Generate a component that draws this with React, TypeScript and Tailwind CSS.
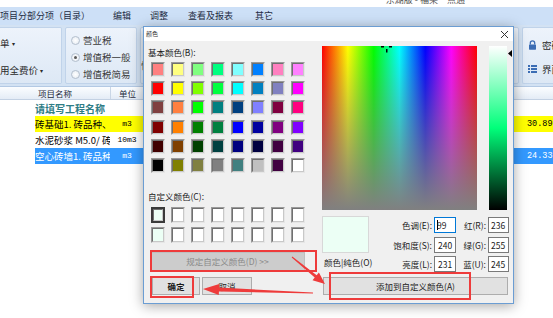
import React from "react";

const BASIC: string[][] = [
  ["#FF8080", "#FFFF80", "#80FF80", "#00FF80", "#80FFFF", "#0080FF", "#FF80C0", "#FF80FF"],
  ["#FF0000", "#FFFF00", "#80FF00", "#00FF40", "#00FFFF", "#0080C0", "#8080C0", "#FF00FF"],
  ["#804040", "#FF8040", "#00FF00", "#008080", "#004080", "#8080FF", "#800040", "#FF0080"],
  ["#800000", "#FF8000", "#008000", "#008040", "#0000FF", "#0000A0", "#800080", "#8000FF"],
  ["#400000", "#804000", "#004000", "#004040", "#000080", "#000040", "#400040", "#400080"],
  ["#000000", "#808000", "#808040", "#808080", "#408080", "#C0C0C0", "#400040", "#FFFFFF"],
];

const CUSTOM: string[] = [
  "#ECFFF5", "#FFFFFF", "#FFFFFF", "#FFFFFF", "#FFFFFF", "#FFFFFF", "#FFFFFF", "#FFFFFF",
  "#ECFFF5", "#FFFFFF", "#FFFFFF", "#FFFFFF", "#FFFFFF", "#FFFFFF", "#FFFFFF", "#FFFFFF",
];

const FIELDS: [string, string, string, string][] = [
  ["色调(E):", "99", "红(R):", "236"],
  ["饱和度(S):", "240", "绿(G):", "255"],
  ["亮度(L):", "231", "蓝(U):", "245"],
];

function Swatch({ color, tall, focus }: { color: string; tall?: boolean; focus?: boolean }) {
  return (
    <div
      className={
        focus
          ? "w-[14px] h-[16px] border-2 border-[#3a3a3a]"
          : tall
          ? "w-[14px] h-[16px] border border-t-[#9a9a9a] border-l-[#9a9a9a] border-b-[#e6e6e6] border-r-[#e6e6e6]"
          : "w-[14px] h-[15px] border border-t-[#9a9a9a] border-l-[#9a9a9a] border-b-[#e6e6e6] border-r-[#e6e6e6]"
      }
    >
      <div
        className="w-full h-full border border-t-[#707070] border-l-[#707070] border-b-[#c8c8c8] border-r-[#c8c8c8]"
        style={{ backgroundColor: color }}
      />
    </div>
  );
}

function Radio({ checked, label }: { checked?: boolean; label: string }) {
  return (
    <div className="h-[17px] flex items-center">
      <div className="w-[9px] h-[9px] rounded-full border border-[#b3bfcd] bg-[radial-gradient(circle,#ffffff,#e3e9f1)] flex items-center justify-center">
        {checked ? <div className="w-[3px] h-[3px] rounded-full bg-[#5a5a5a]" /> : null}
      </div>
      <span className="ml-[3px]">{label}</span>
    </div>
  );
}

export default function App() {
  return (
    <div className="relative w-[553px] h-[318px] overflow-hidden bg-white font-['Noto_Sans_CJK_SC','Noto_Sans',sans-serif] text-[#1a1a1a]">
      {/* window title strip */}
      <div className="h-[7px] overflow-hidden flex justify-end pr-[88px] bg-white">
        <span className="-mt-[6px] text-[9px] leading-[12px] text-[#555] whitespace-nowrap">东湖版 - 福莱一点通</span>
      </div>

      {/* menu bar */}
      <div className="h-[18px] bg-[#cde0f7] flex items-center text-[9px] leading-[12px] text-[#1e2d44] whitespace-nowrap">
        <span>项目分部分项（目录）</span>
        <span className="ml-[23px]">编辑</span>
        <span className="ml-[19px]">调整</span>
        <span className="ml-[20px]">查看及报表</span>
        <span className="ml-[22px]">其它</span>
      </div>

      {/* ribbon */}
      <div className="h-[62px] bg-[#d3e2f3] flex items-stretch py-[2px] border-b border-[#b3c9e4] text-[9.5px] leading-[12px] text-[#2a2a2a] whitespace-nowrap">
        <div className="w-[62px] shrink-0 rounded-r-[2px] border border-l-0 border-[#c0d3ea] bg-[linear-gradient(to_bottom,#edf3fb,#dde8f5)] flex flex-col">
          <span className="mt-[9px]">
            单 <span className="text-[6px] align-middle">▾</span>
          </span>
          <span className="mt-[14px]">
            用全费价 <span className="text-[6px] align-middle">▾</span>
          </span>
        </div>
        <div className="ml-[3px] w-[72px] shrink-0 rounded-[2px] border border-[#c0d3ea] bg-[linear-gradient(to_bottom,#edf3fb,#dde8f5)] flex flex-col pt-[3.5px] pl-[5px] text-[#3a3a3a]">
          <Radio label="营业税" />
          <Radio checked label="增值税一般" />
          <Radio label="增值税简易" />
        </div>
        <div className="ml-[3px] flex-1 min-w-0 rounded-[2px] border border-[#c0d3ea] bg-[linear-gradient(to_bottom,#edf3fb,#dde8f5)] flex flex-col">
          <span className="mt-[31px] text-[#3a3a3a]">恒</span>
        </div>
        <div className="ml-[3px] w-[31px] shrink-0 overflow-hidden rounded-l-[2px] border border-r-0 border-[#c0d3ea] bg-[linear-gradient(to_bottom,#edf3fb,#dde8f5)] flex flex-col pl-[5px]">
          <div className="mt-[11px] flex items-center">
            <svg className="shrink-0" width="9" height="10" viewBox="0 0 9 10">
              <path d="M2.3 4.6V3.1a2.2 2.2 0 0 1 4.4 0v1.5" fill="none" stroke="#3c6db4" strokeWidth="1.3" />
              <rect x="1" y="4.5" width="7" height="5.2" rx="0.6" fill="#3c6db4" />
            </svg>
            <span className="ml-[5px]">密码</span>
          </div>
          <div className="mt-[12px] flex items-center">
            <svg className="shrink-0" width="9" height="8" viewBox="0 0 9 8">
              <rect x="0" y="0" width="2" height="2" fill="#3c6db4" />
              <rect x="3" y="0" width="6" height="2" fill="#3c6db4" />
              <rect x="0" y="3" width="2" height="2" fill="#3c6db4" />
              <rect x="3" y="3" width="6" height="2" fill="#3c6db4" />
              <rect x="0" y="6" width="2" height="2" fill="#3c6db4" />
              <rect x="3" y="6" width="6" height="2" fill="#3c6db4" />
            </svg>
            <span className="ml-[5px]">界面</span>
          </div>
        </div>
      </div>

      {/* table header */}
      <div className="h-[13px] flex bg-[linear-gradient(to_bottom,#fbfdff,#e4ecf6)] border-b border-[#c3d1e3] text-[8.5px] leading-[12px] text-[#1e2b3c]">
        <div className="w-[110px] flex items-center justify-center">项目名称</div>
        <div className="w-[34px] flex items-center justify-center border-l border-[#c9d6e6]">单位</div>
        <div className="flex-1 border-l border-[#c9d6e6]" />
      </div>

      {/* rows */}
      <div className="flex flex-col text-[9.5px] whitespace-nowrap">
        <div className="h-[16px] flex">
          <div className="w-[35px]" />
          <div className="flex-1 flex items-center">
            <div className="w-[75px] overflow-hidden font-bold text-[10px] text-[#2f7d86]">请填写工程名称</div>
          </div>
        </div>
        <div className="h-[16px] flex">
          <div className="w-[35px]" />
          <div className="flex-1 flex items-center bg-[#ffff00] text-black">
            <div className="w-[75px] overflow-hidden">砖基础1. 砖品种、规</div>
            <div className="w-[34px] text-center font-['Liberation_Mono',monospace] text-[8px]">m3</div>
            <div className="flex-1" />
            <div className="w-[26px] overflow-hidden font-['Liberation_Mono',monospace] text-[8.5px]">30.89[</div>
          </div>
        </div>
        <div className="h-[16px] flex">
          <div className="w-[35px]" />
          <div className="flex-1 flex items-center text-black">
            <div className="w-[75px] overflow-hidden">水泥砂浆 M5.0/ 砖:</div>
            <div className="w-[34px] text-center font-['Liberation_Mono',monospace] text-[8px]">10m3</div>
          </div>
        </div>
        <div className="h-[16px] flex">
          <div className="w-[35px]" />
          <div className="flex-1 flex items-center bg-[#3399ff] text-white">
            <div className="w-[75px] overflow-hidden">空心砖墙1. 砖品种、</div>
            <div className="w-[34px] text-center font-['Liberation_Mono',monospace] text-[8px]">m3</div>
            <div className="flex-1" />
            <div className="w-[26px] overflow-hidden font-['Liberation_Mono',monospace] text-[8.5px]">24.33[</div>
          </div>
        </div>
      </div>

      {/* color dialog */}
      <div className="absolute left-[143px] top-[26px] w-[371px] h-[278px] border border-[#6b9dd3] bg-[#f0f0f0] shadow-[0_2px_12px_rgba(0,0,0,0.35)] flex flex-col">
        <div className="h-[14px] bg-white flex items-center justify-between">
          <span className="ml-[2px] text-[6px] leading-[8px] text-[#333]">颜色</span>
          <svg className="mr-[4px]" width="9" height="9" viewBox="0 0 9 9">
            <path d="M1 1L8 8M8 1L1 8" stroke="#333" strokeWidth="1" />
          </svg>
        </div>
        <div className="flex-1 flex text-[8.5px] leading-[10px] text-[#1a1a1a] whitespace-nowrap">
          {/* left column */}
          <div className="w-[173px] pl-[4px] flex flex-col">
            <div className="mt-[6px]">基本颜色(B):</div>
            <div className="ml-[3px] mt-[5px] grid grid-cols-[repeat(8,14px)] gap-x-[6px] gap-y-[4.2px]">
              {BASIC.flat().map((c, i) => (
                <Swatch key={i} color={c} />
              ))}
            </div>
            <div className="mt-[18px]">自定义颜色(C):</div>
            <div className="ml-[3px] mt-[6px] grid grid-cols-[repeat(8,14px)] gap-x-[6px] gap-y-[4px]">
              {CUSTOM.map((c, i) => (
                <Swatch key={i} color={c} tall focus={i === 0} />
              ))}
            </div>
            <div className="ml-[2px] mt-[9px] w-[155px] h-[19px] bg-[#cccccc] border border-[#bfbfbf] flex items-center justify-center text-[#8a8a8a]">
              规定自定义颜色(D) &gt;&gt;
            </div>
            <div className="mt-[6px] flex">
              <div className="ml-[4px] w-[48px] h-[18px] bg-[#e1e1e1] border border-[#adadad] flex items-center justify-center font-semibold">
                确定
              </div>
              <div className="ml-[2px] w-[50px] h-[18px] bg-[#e1e1e1] border border-[#adadad] flex items-center justify-center">
                取消
              </div>
            </div>
          </div>

          {/* right column */}
          <div className="flex-1 pl-[5px] flex flex-col">
            <div className="mt-[5px] flex items-start">
              <div className="relative w-[155px] h-[164px] bg-[linear-gradient(to_bottom,rgba(128,128,128,0),#808080),linear-gradient(to_right,#ff0000,#ffff00,#00ff00,#00ffff,#0000ff,#ff00ff,#ff0000)]">
                <svg className="absolute left-[59px] top-0" width="12" height="7" viewBox="0 0 12 7">
                  <rect x="0" y="0" width="3" height="1.5" fill="#000" />
                  <rect x="8" y="0" width="3" height="1.5" fill="#000" />
                  <rect x="5" y="3" width="1.5" height="3.5" fill="#000" />
                </svg>
              </div>
              <div className="ml-[12px] w-[18px] h-[164px] bg-[linear-gradient(to_bottom,#ffffff,#00ff7a_50%,#000000)]" />
              <svg className="ml-[1px] mt-[4px]" width="4" height="7" viewBox="0 0 4 7">
                <path d="M4 0L0 3.5L4 7Z" fill="#000" />
              </svg>
            </div>
            <div className="mt-[6px] flex">
              <div className="w-[50px] flex flex-col">
                <div className="w-[47px] h-[37px] bg-[#ecfff5] border border-[#d8d8d8]" />
                <div className="ml-[2px] mt-[4px]">颜色|纯色(O)</div>
              </div>
              <div className="mt-[1px] flex flex-col gap-y-[3.5px]">
                {FIELDS.map((f, i) => (
                  <div key={i} className="h-[16px] flex items-center">
                    <div className="w-[60px] text-right">{f[0]}</div>
                    <div
                      className={
                        i === 0
                          ? "ml-[2px] w-[22px] h-[16px] bg-white border border-[#0078d7] flex items-center pl-[2px]"
                          : "ml-[2px] w-[22px] h-[16px] bg-white border border-[#7a7a7a] flex items-center pl-[3px]"
                      }
                    >
                      {i === 0 ? <span className="w-[1px] h-[10px] bg-black mr-[-1px]" /> : null}
                      <span>{f[1]}</span>
                    </div>
                    <div className="w-[30px] text-right">{f[2]}</div>
                    <div className="ml-[2px] w-[21px] h-[16px] bg-white border border-[#7a7a7a] flex items-center pl-[2px]">
                      {f[3]}
                    </div>
                  </div>
                ))}
              </div>
            </div>
            <div className="ml-[1px] mt-[5px] w-[185px] h-[18px] bg-[#e1e1e1] border border-[#adadad] flex items-center justify-center">
              添加到自定义颜色(A)
            </div>
          </div>
        </div>
      </div>

      {/* red annotation boxes */}
      <div className="absolute left-[150px] top-[250px] w-[167px] h-[22px] border-2 border-[#ee3b3b]" />
      <div className="absolute left-[150px] top-[276px] w-[44px] h-[22px] border-2 border-[#ee3b3b]" />
      <div className="absolute left-[329px] top-[272px] w-[142px] h-[28px] border-2 border-[#ee3b3b]" />

      {/* red arrows */}
      <svg className="absolute left-0 top-0 pointer-events-none" width="553" height="318" viewBox="0 0 553 318">
        <polygon
          points="292.3,256.6 316.65,275.24 318.9,272.5 325,284 312.5,280.3 314.75,277.56 291.7,257.4"
          fill="#ee3b3b"
        />
        <polygon
          points="313,292.5 219.07,287.6 219.2,284.1 203,289 218.8,295.1 218.93,291.6 313,293.5"
          fill="#ee3b3b"
        />
      </svg>
    </div>
  );
}
